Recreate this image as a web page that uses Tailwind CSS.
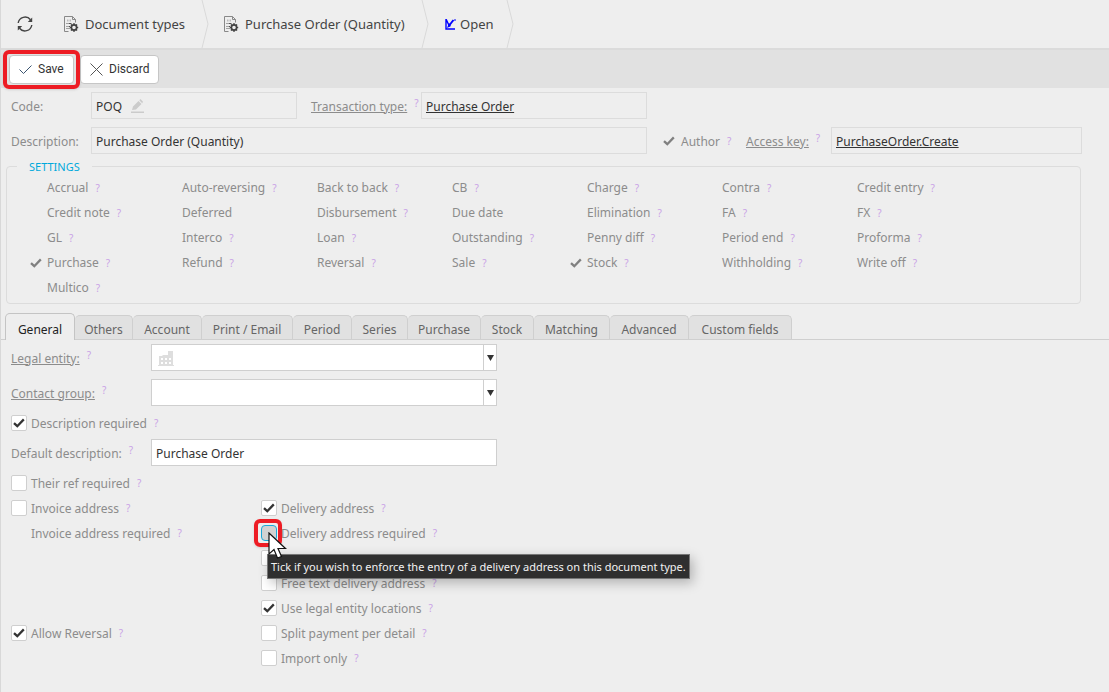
<!DOCTYPE html>
<html lang="en">
<head>
  <meta charset="UTF-8" />
  <meta name="viewport" content="width=device-width, initial-scale=1.0" />
  <title>Purchase Order (Quantity)</title>
  <script src="https://cdn.jsdelivr.net/npm/@tailwindcss/browser@4"></script>
</head>
<body class="min-h-screen border-l border-[#d8d8d8] bg-[#eeeeee] font-['Noto_Sans','Open_Sans',sans-serif] text-[12px] leading-[18px] text-[#8c8c8c]">

  <!-- icons -->
  <svg class="hidden">
    <symbol id="i-doc" viewBox="0 0 16 18">
      <path d="M5.500 16.500H1.500V1.500H9.500L12.500 4.500V7.500" fill="none" stroke="#888" />
      <path d="M9.500 1.500V4.500H12.500" fill="none" stroke="#888" />
      <path d="M4 5.500h1.500M6.500 5.500h1.500" stroke="#bbb" stroke-width="2" />
      <path d="M3.500 8.500h1M5.500 8.500h3M3.500 11.500h1M5.500 11.500h1.500M3.500 13.500h1M5.500 13.500h1" stroke="#555" />
      <circle cx="11" cy="12.500" r="2.600" fill="none" stroke="#444" stroke-width="1.600" />
      <path d="M11 8.300v1.500M11 15.200v1.500M6.800 12.500h1.500M13.700 12.500h1.500M8 9.500l1.100 1.100M12.900 14.400l1.100 1.100M8 15.500l1.100-1.100M12.900 10.600l1.100-1.100" stroke="#444" stroke-width="1.700" />
    </symbol>
    <symbol id="i-tick" viewBox="0 0 12 10">
      <path d="M1 5.200L4.300 8.200L10.800 1.400" fill="none" stroke="currentColor" stroke-width="2.300" />
    </symbol>
    <symbol id="i-sep" viewBox="0 0 8 48">
      <path d="M1 0L7 24L1 48" fill="none" stroke="#d9d9d9" />
    </symbol>
  </svg>

  <header class="flex h-[50px] items-center border-b-2 border-[#dbdbdb] text-[13px] text-[#444]">
    <button class="ml-4 mr-[30px]" aria-label="Refresh">
      <svg class="size-4" viewBox="0 0 16 16" fill="none" stroke="#444" stroke-width="1.400">
        <path d="M1.200 7A6.900 6.900 0 0 1 13.500 3.800M14.800 9A6.900 6.900 0 0 1 2.500 12.200" />
        <path d="M15.200 1.500V6H10.800zM.800 14.500V10H5.200z" fill="#444" stroke="none" />
      </svg>
    </button>
    <nav class="flex h-12 items-center">
      <a href="#" class="flex w-[138px] items-center gap-1.5"><svg class="h-[18px] w-4"><use href="#i-doc" /></svg>Document types</a>
      <svg class="mr-[14px] h-12 w-2"><use href="#i-sep" /></svg>
      <a href="#" class="flex w-[198px] items-center gap-1.5"><svg class="h-[18px] w-4"><use href="#i-doc" /></svg>Purchase Order (Quantity)</a>
      <svg class="mr-4 h-12 w-2"><use href="#i-sep" /></svg>
      <a href="#" class="flex w-[61px] items-center gap-1">
        <svg class="size-[11px]" viewBox="0 0 11 11" fill="none" stroke="#0000ff"><path d="M1 0V10H10M1 0L4.500 7.500" stroke-width="1.400" /><path d="M4.500 6L8.500 1" stroke-width="2" /><path d="M2 9L4 4L6 7z" fill="#0000ff" stroke="none" /><path d="M9 1h2" /></svg>
        Open
      </a>
      <svg class="h-12 w-2"><use href="#i-sep" /></svg>
    </nav>
  </header>

  <div class="relative flex h-[38px] items-center gap-[6px] bg-[#e1e1e1] pl-2 font-[Roboto,sans-serif] text-[12px] text-[#333]">
    <span class="absolute -left-px top-[7px] h-6 w-px bg-[#4fc0e0]"></span>
    <div class="relative">
      <button class="flex h-[29px] w-[65px] items-center gap-1.5 rounded border border-[#c6c6c6] bg-white pl-[9px]">
        <svg class="h-3 w-[13px]" viewBox="0 0 13 12"><path d="M.500 6.500L4.500 10.500L12.500 2.500" fill="none" stroke="#3b5570" /></svg>Save
      </button>
      <span class="pointer-events-none absolute -inset-x-[6px] -inset-y-[5px] rounded-md border-4 border-[#ed1c24] shadow-sm"></span>
    </div>
    <button class="flex h-[29px] w-[79px] items-center gap-1.5 rounded border border-[#c6c6c6] bg-white pl-[9px]">
      <svg class="size-[13px]" viewBox="0 0 13 13"><path d="M.500.500L12.500 12.500M12.500.500L.500 12.500" stroke="#555" /></svg>Discard
    </button>
  </div>

  <main>
    <div class="flex h-[35px] items-center pl-[10px]">
      <label for="code" class="w-20 pt-0.5">Code:</label>
      <div class="relative">
        <input id="code" value="POQ" readonly class="h-[27px] w-[206px] border border-[#dcdcdc] px-1 pt-0.5 text-[#333]" />
        <svg class="absolute left-10 top-[7px] h-[14px] w-[13px]" viewBox="0 0 13 14" fill="#cbcbcb"><path d="M1 11L2 7.500L7.500 2L10.500 5L5 10.500zM8.300 1.300L9.500 0L12 2.700L11.200 4.200zM0 12.500h13v1.500H0z" /></svg>
      </div>
      <div class="flex w-[124px] items-start whitespace-nowrap pl-[14px] pt-0.5"><a href="#" class="underline">Transaction type:</a><span class="ml-[7px] text-[10px] leading-[10px] text-[#c9a2e6]">?</span></div>
      <div class="flex h-[27px] w-[226px] items-center border border-[#dcdcdc] px-1 pt-0.5"><a href="#" class="text-[#333] underline">Purchase Order</a></div>
    </div>
    <div class="flex h-[35px] items-center pl-[10px] pr-[27px]">
      <label for="desc" class="w-20 whitespace-nowrap pt-0.5">Description:</label>
      <input id="desc" value="Purchase Order (Quantity)" readonly class="h-[27px] w-[556px] border border-[#dcdcdc] px-1 pt-0.5 text-[#333]" />
      <label class="flex w-[99px] items-center pl-4">
        <input type="checkbox" checked disabled class="peer absolute size-3 appearance-none" />
        <svg class="mr-[6px] h-[10px] w-3 text-[#808080]"><use href="#i-tick" /></svg><span class="pt-0.5">Author</span><span class="ml-[7px] text-[10px] text-[#c9a2e6]">?</span>
      </label>
      <div class="flex w-[85px] items-start whitespace-nowrap pt-0.5"><a href="#" class="underline">Access key:</a><span class="ml-[7px] text-[10px] leading-[10px] text-[#c9a2e6]">?</span></div>
      <div class="flex h-[27px] flex-1 items-center border border-[#dcdcdc] px-1 pt-0.5"><a href="#" class="text-[#333] underline">PurchaseOrder.Create</a></div>
    </div>

    <fieldset class="ml-[5px] mr-[28px] rounded border border-[#dcdcdc] pb-[3px]">
      <legend class="ml-[10px] px-3 pt-px text-[11px] leading-4 text-[#00a9dc]">SETTINGS</legend>
      <div id="settings" class="grid grid-cols-[repeat(7,135px)] pl-[23px]"></div>
    </fieldset>

    <div id="tabs" role="tablist" class="mt-[9px] flex h-[27px] items-end border-b border-[#cfcfcf] pl-1 text-[#666]"></div>

    <section role="tabpanel" class="pl-[10px]">
      <div class="flex h-[35px] items-center">
        <label for="entity" class="flex w-[140px] items-start pt-0.5"><a href="#" class="underline">Legal entity:</a><span class="ml-[7px] text-[10px] leading-[10px] text-[#c9a2e6]">?</span></label>
        <div class="relative">
          <select id="entity" class="h-[27px] w-[346px] appearance-none border border-[#cfcfcf] bg-white"><option></option></select>
          <svg class="pointer-events-none absolute left-[7px] top-[7px] h-[15px] w-4" viewBox="0 0 16 15"><path d="M1 14V5h3l1-1h5V0h5v14zM0 14h16v1H0z" fill="#dedede" /><path d="M3 7h2v2H3zM7 7h2v2H7zM11 7h2v2h-2zM3 11h2v2H3zM7 11h2v2H7zM11 11h2v2h-2z" fill="#fff" /></svg>
          <span class="pointer-events-none absolute inset-y-0 right-0 flex w-[14px] items-center justify-center border border-[#cfcfcf]"><svg class="h-[6px] w-[7px]" viewBox="0 0 7 6"><path d="M0 0h7L3.500 6z" fill="#333" /></svg></span>
        </div>
      </div>
      <div class="flex h-[35px] items-center">
        <label for="group" class="flex w-[140px] items-start pt-0.5"><a href="#" class="underline">Contact group:</a><span class="ml-[7px] text-[10px] leading-[10px] text-[#c9a2e6]">?</span></label>
        <div class="relative">
          <select id="group" class="h-[27px] w-[346px] appearance-none border border-[#cfcfcf] bg-white"><option></option></select>
          <span class="pointer-events-none absolute inset-y-0 right-0 flex w-[14px] items-center justify-center border border-[#cfcfcf]"><svg class="h-[6px] w-[7px]" viewBox="0 0 7 6"><path d="M0 0h7L3.500 6z" fill="#333" /></svg></span>
        </div>
      </div>
      <div data-checks="Description required*"></div>
      <div class="flex h-[35px] items-center">
        <label for="defdesc" class="flex w-[140px] items-start whitespace-nowrap pt-0.5">Default description:<span class="ml-[7px] text-[10px] leading-[10px] text-[#c9a2e6]">?</span></label>
        <input id="defdesc" value="Purchase Order" class="h-[27px] w-[346px] border border-[#cfcfcf] bg-white px-1 pt-0.5 text-[#333]" />
      </div>
      <div class="grid grid-cols-[250px_1fr]">
        <div data-checks="Their ref required|Invoice address|-Invoice address required"></div>
        <div class="relative pt-[25px]">
          <div data-checks="Delivery address*|!Delivery address required||Free text delivery address|Use legal entity locations*|Split payment per detail|Import only"></div>
          <span class="pointer-events-none absolute -left-[7px] top-[49px] h-7 w-[28px] rounded-md border-4 border-[#ed1c24] shadow-sm"></span>
          <div role="tooltip" class="absolute left-[6px] top-[84px] flex h-[25px] items-center whitespace-nowrap border border-[#767676] bg-[#2f2f2f] px-[3px] text-[11px] text-[#f2f2f2] shadow-[3px_4px_12px_rgba(0,0,0,0.25)]">Tick if you wish to enforce the entry of a delivery address on this document type.</div>
          <svg class="pointer-events-none absolute left-[7px] top-[62px] h-[27px] w-[19px]" viewBox="0 0 19 27"><path d="M1 1V22L6 17.500L9.500 26L13.500 24.500L10 16.500H17.500z" fill="#fff" stroke="#111" stroke-width="1.200" /></svg>
        </div>
        <div class="-mt-[50px]" data-checks="Allow Reversal*"></div>
      </div>
    </section>
  </main>

  <script>
    const help = '<span class="ml-[7px] text-[10px] text-[#c9a2e6]">?</span>';

    // "*" = ticked, "~" = no help mark
    const settings = [
      'Accrual', 'Auto-reversing', 'Back to back', 'CB', 'Charge', 'Contra', 'Credit entry',
      'Credit note', 'Deferred~', 'Disbursement', 'Due date~', 'Elimination', 'FA', 'FX',
      'GL', 'Interco', 'Loan', 'Outstanding', 'Penny diff', 'Period end', 'Proforma',
      'Purchase*', 'Refund', 'Reversal', 'Sale', 'Stock*', 'Withholding', 'Write off',
      'Multico',
    ];
    document.getElementById('settings').innerHTML = settings.map(s => `
      <label class="flex h-[25px] items-center whitespace-nowrap">
        <input type="checkbox" disabled ${s.includes('*') ? 'checked' : ''} class="peer absolute size-3 appearance-none" />
        <svg class="invisible mr-[5px] h-[10px] w-3 text-[#808080] peer-checked:visible"><use href="#i-tick" /></svg>
        ${s.replace(/[*~]/, '')}${s.includes('~') ? '' : help}
      </label>`).join('');

    const tabs = [['General', 70], ['Others', 58], ['Account', 69], ['Print / Email', 91], ['Period', 59], ['Series', 56],
      ['Purchase', 73], ['Stock', 53], ['Matching', 76], ['Advanced', 79], ['Custom fields', 103]];
    document.getElementById('tabs').innerHTML = tabs.map(([name, width], i) => i === 0
      ? `<button role="tab" aria-selected="true" style="width:${width}px" class="-mb-px h-[27px] whitespace-nowrap rounded-t-[5px] border border-b-0 border-[#c4c4c4] bg-[#eeeeee] pt-1.5 text-[#222]">${name}</button>`
      : `<button role="tab" style="width:${width}px" class="h-6 whitespace-nowrap rounded-t-[5px] border border-b-0 border-l-0 border-[#cfcfcf] bg-[#e1e1e1] pt-[5px]">${name}</button>`).join('');

    // "-" = hidden box, "!" = hovered box, "*" = ticked, empty = box without text
    document.querySelectorAll('[data-checks]').forEach(el => {
      el.innerHTML = el.dataset.checks.split('|').map(c => `
        <label class="relative flex h-[25px] items-center whitespace-nowrap">
          <input type="checkbox" ${c.includes('*') ? 'checked' : ''} ${c ? '' : 'aria-label="Option"'} class="peer mr-1 size-4 appearance-none border ${c[0] === '-' ? 'invisible' : c[0] === '!' ? 'rounded border-[#1ba8d8] bg-[#d2d2d2]' : 'rounded-xs border-[#cfcfcf] bg-white'}" />
          <svg class="invisible absolute left-[2px] h-[10px] w-3 text-[#333] peer-checked:visible"><use href="#i-tick" /></svg>
          <span class="pt-0.5">${c.replace(/[-!*]/, '')}</span>${c ? help : ''}
        </label>`).join('');
    });
  </script>
</body>
</html>
